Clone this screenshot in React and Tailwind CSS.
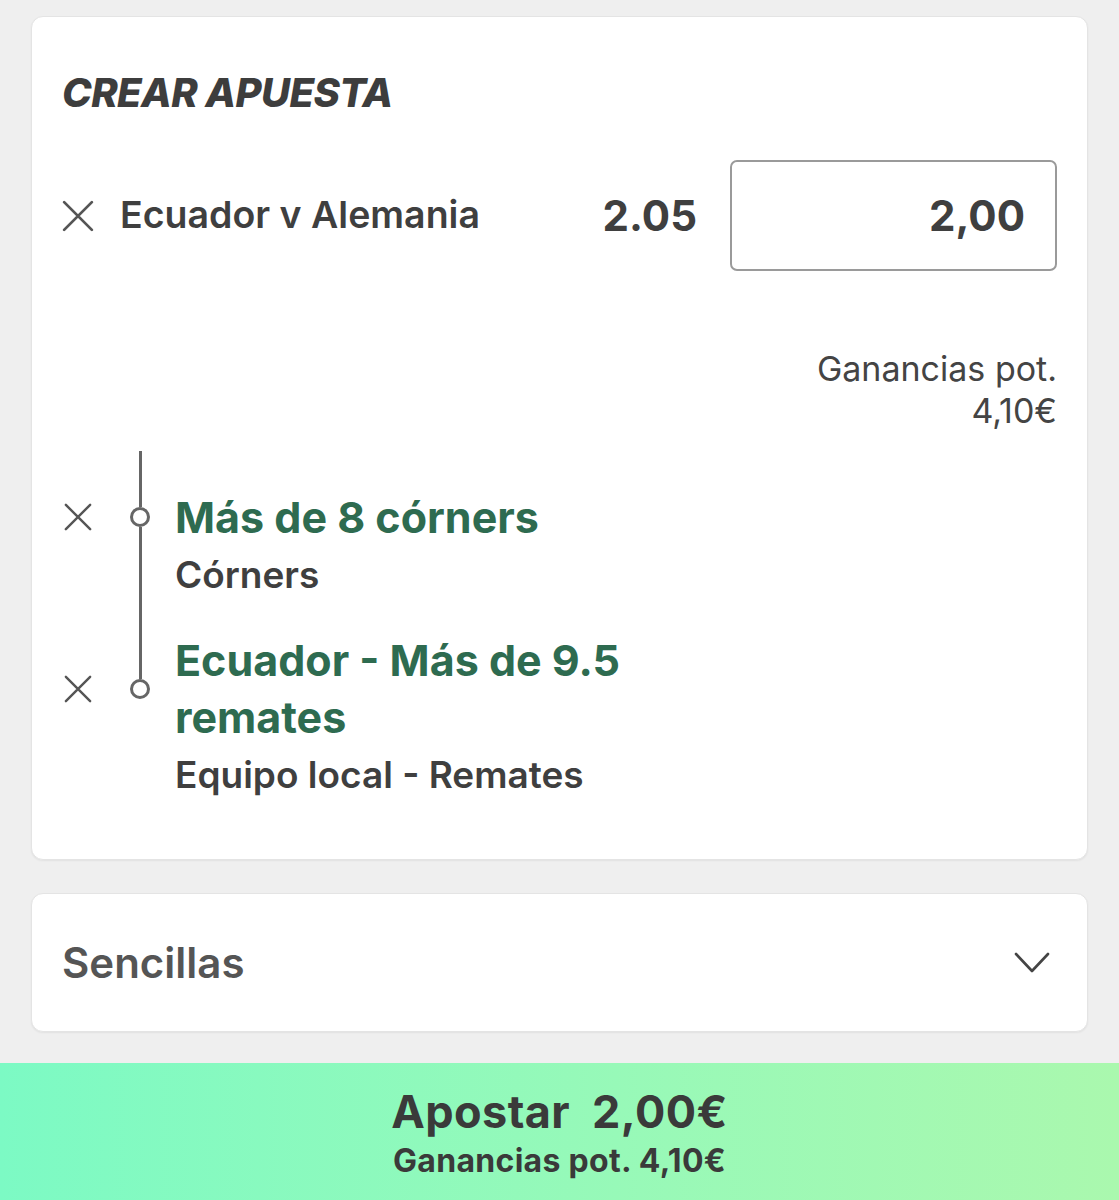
const FONT = { fontFamily: 'Inter, "Noto Sans", "Liberation Sans", sans-serif' }

function CloseIcon({ size = 30 }) {
  return (
    <svg width={size} height={size} viewBox="0 0 30 30" fill="none">
      <path d="M2 2 L28 28 M28 2 L2 28" stroke="#555" strokeWidth="2.6" strokeLinecap="round" />
    </svg>
  )
}

function Chevron() {
  return (
    <svg width="36" height="24" viewBox="0 0 36 24" fill="none">
      <path d="M2 3 L18 20 L34 3" stroke="#444" strokeWidth="2.6" strokeLinecap="round" strokeLinejoin="round" />
    </svg>
  )
}

// one row of the timeline: x column, line/circle column, text
function TimelineRow({ withX, circle, lineTop = true, lineBottom = true, children }) {
  return (
    <div className="flex items-stretch">
      <div className="w-[68px] flex items-center">
        {withX && (
          <span className="ml-[2px]">
            <CloseIcon size={28} />
          </span>
        )}
      </div>
      <div className="w-[20px] flex flex-col items-center">
        <div className={`flex-1 w-[3px] ${lineTop ? 'bg-[#666]' : ''}`} />
        {circle && <div className="w-[20px] h-[20px] rounded-full border-[3px] border-[#666] bg-white shrink-0" />}
        {circle && <div className={`flex-1 w-[3px] ${lineBottom ? 'bg-[#666]' : ''}`} />}
      </div>
      <div className="ml-[25px] flex-1">{children}</div>
    </div>
  )
}

export default function App() {
  return (
    <div className="min-h-[1200px] bg-[#efefef] flex flex-col" style={FONT}>
      <div className="mx-[31px] mt-[16px] bg-white rounded-[12px] border border-[#e4e4e4] shadow-[0_1px_2px_rgba(0,0,0,0.06)] pl-[30px] pr-[30px] pt-[52px] pb-[56px]">
        <h1 className="text-[40px] leading-[48px] font-extrabold italic text-[#3d3d3d] tracking-[-0.6px]">
          CREAR APUESTA
        </h1>

        <div className="mt-[43px] flex items-center">
          <CloseIcon size={32} />
          <span className="ml-[26px] text-[37.5px] font-semibold text-[#3f3f3f]">Ecuador v Alemania</span>
          <span className="ml-auto text-[42px] font-bold text-[#3f3f3f]">2.05</span>
          <div className="ml-[33px] w-[327px] h-[111px] border-[2.5px] border-[#9a9a9a] rounded-[7px] flex items-center justify-end pr-[30px]">
            <span className="text-[42px] font-bold text-[#3f3f3f]">2,00</span>
          </div>
        </div>

        <div className="mt-[77px] text-right text-[34px] leading-[42px] text-[#444]">
          <div>Ganancias pot.</div>
          <div>4,10€</div>
        </div>

        <div className="mt-[19px]">
          <TimelineRow>
            <div className="h-[37px]" />
          </TimelineRow>
          <TimelineRow withX circle>
            <div className="text-[43px] leading-[58px] font-bold text-[#2e6b50]">Más de 8 córners</div>
          </TimelineRow>
          <TimelineRow>
            <div className="text-[37px] leading-[57px] font-semibold text-[#3f3f3f] pb-[29px]">Córners</div>
          </TimelineRow>
          <TimelineRow withX circle lineBottom={false}>
            <div className="text-[43px] leading-[57px] font-bold text-[#2e6b50]">
              Ecuador - Más de 9.5
              <br />
              remates
            </div>
          </TimelineRow>
          <TimelineRow lineTop={false}>
            <div className="text-[37px] leading-[57px] font-semibold text-[#3f3f3f]">Equipo local - Remates</div>
          </TimelineRow>
        </div>
      </div>

      <div className="mx-[31px] mt-[33px] h-[139px] bg-white rounded-[12px] border border-[#e4e4e4] shadow-[0_1px_2px_rgba(0,0,0,0.06)] flex items-center pl-[30px] pr-[37px]">
        <span className="text-[42px] font-semibold text-[#555]">Sencillas</span>
        <span className="ml-auto">
          <Chevron />
        </span>
      </div>

      <div className="mt-[31px] h-[139px] bg-gradient-to-r from-[#7cfac4] to-[#aaf8ae] flex flex-col items-center justify-center">
        <div className="text-[45px] leading-[52px] font-bold text-[#3a3a3a] whitespace-pre tracking-[0.4px]">Apostar  2,00€</div>
        <div className="text-[32px] leading-[38px] font-bold text-[#3a3a3a] mt-[4px] tracking-[0.3px]">Ganancias pot. 4,10€</div>
      </div>
    </div>
  )
}
